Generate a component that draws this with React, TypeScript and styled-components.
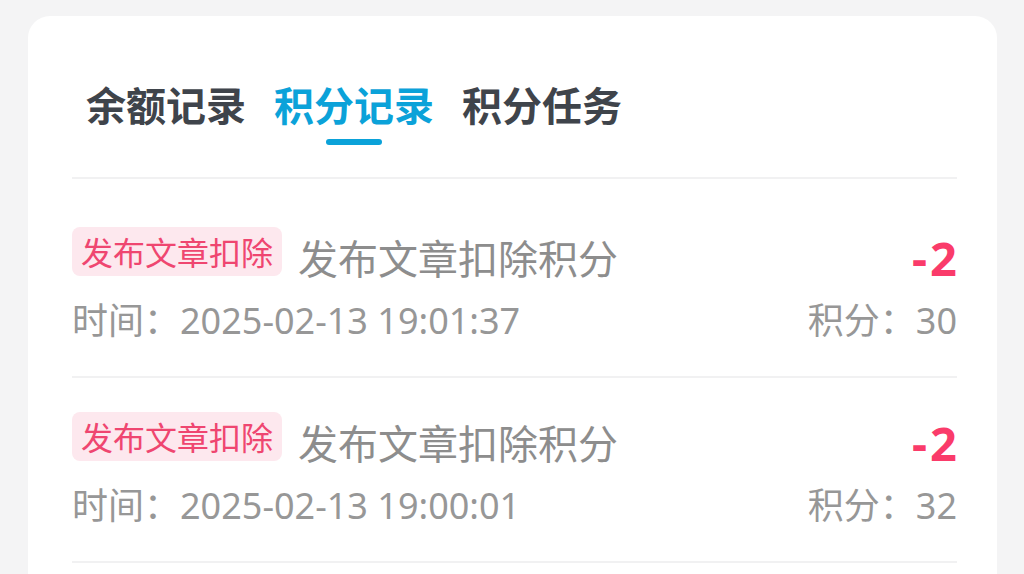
import styled, { createGlobalStyle } from 'styled-components';

interface PointRecord {
  tag: string;
  title: string;
  time: string;
  amount: number;
  balance: number;
}

const records: PointRecord[] = [
  { tag: '发布文章扣除', title: '发布文章扣除积分', time: '2025-02-13 19:01:37', amount: -2, balance: 30 },
  { tag: '发布文章扣除', title: '发布文章扣除积分', time: '2025-02-13 19:00:01', amount: -2, balance: 32 },
];

const tabs = ['余额记录', '积分记录', '积分任务'];

const GlobalStyle = createGlobalStyle`
  html, body {
    margin: 0;
    padding: 0;
    background: #f4f4f5;
    font-family: "Noto Sans", "Noto Sans CJK SC", sans-serif;
    overflow: hidden;
  }
`;

const Page = styled.div`
  padding: 16px 27px 0 28px;
  height: 574px;
  box-sizing: border-box;
`;

const Card = styled.div`
  background: #ffffff;
  border-radius: 22px;
  padding: 60px 40px 0 44px;
  min-height: 700px;
  box-sizing: border-box;
`;

const TabBar = styled.div`
  display: flex;
  flex-direction: row;
  padding-bottom: 32px;
  border-bottom: 2px solid #f1f1f2;
`;

const Tab = styled.div`
  display: flex;
  flex-direction: column;
  align-items: center;
  padding: 0 14px;
`;

const TabLabel = styled.span<{ $active?: boolean }>`
  font-family: "Noto Sans CJK SC", sans-serif;
  font-size: 40px;
  line-height: 56px;
  font-weight: 700;
  color: ${({ $active }) => ($active ? '#0ba2d9' : '#3f444b')};
`;

const Indicator = styled.span<{ $active?: boolean }>`
  width: 56px;
  height: 6px;
  margin-top: 7px;
  border-radius: 3px;
  background: ${({ $active }) => ($active ? '#0ba2d9' : 'transparent')};
`;

const List = styled.div`
  padding-top: 14px;
`;

const Row = styled.div`
  display: flex;
  flex-direction: column;
  padding: 34px 0 30px;
  border-bottom: 2px solid #f1f1f2;
`;

const TopLine = styled.div`
  display: flex;
  flex-direction: row;
  align-items: flex-start;
  justify-content: space-between;
  height: 48px;
`;

const Heading = styled.div`
  display: flex;
  flex-direction: row;
  align-items: flex-start;
  gap: 16px;
`;

const Tag = styled.span`
  font-family: "Noto Sans CJK SC", sans-serif;
  font-size: 32px;
  line-height: 49px;
  padding: 0 9px;
  border-radius: 8px;
  background: #fde8ee;
  color: #ef4670;
`;

const Title = styled.span`
  font-family: "Noto Sans CJK SC", sans-serif;
  font-size: 40px;
  line-height: 48px;
  padding-top: 6px;
  color: #8d8d8d;
`;

const Amount = styled.span`
  font-family: "Noto Sans", sans-serif;
  font-size: 47px;
  line-height: 48px;
  font-weight: 700;
  letter-spacing: 3px;
  margin-right: -3px;
  padding-top: 7px;
  color: #fa3b6a;
`;

const BottomLine = styled.div`
  display: flex;
  flex-direction: row;
  justify-content: space-between;
  margin-top: 21px;
  font-size: 36px;
  line-height: 50px;
  color: #979797;
`;

const App = () => (
  <>
    <GlobalStyle />
    <Page>
      <Card>
        <TabBar>
          {tabs.map((name) => (
            <Tab key={name}>
              <TabLabel $active={name === '积分记录'}>{name}</TabLabel>
              <Indicator $active={name === '积分记录'} />
            </Tab>
          ))}
        </TabBar>
        <List>
          {records.map((r) => (
            <Row key={r.time}>
              <TopLine>
                <Heading>
                  <Tag>{r.tag}</Tag>
                  <Title>{r.title}</Title>
                </Heading>
                <Amount>{r.amount > 0 ? `+${r.amount}` : r.amount}</Amount>
              </TopLine>
              <BottomLine>
                <span>时间：{r.time}</span>
                <span>积分：{r.balance}</span>
              </BottomLine>
            </Row>
          ))}
        </List>
      </Card>
    </Page>
  </>
);

export default App;
